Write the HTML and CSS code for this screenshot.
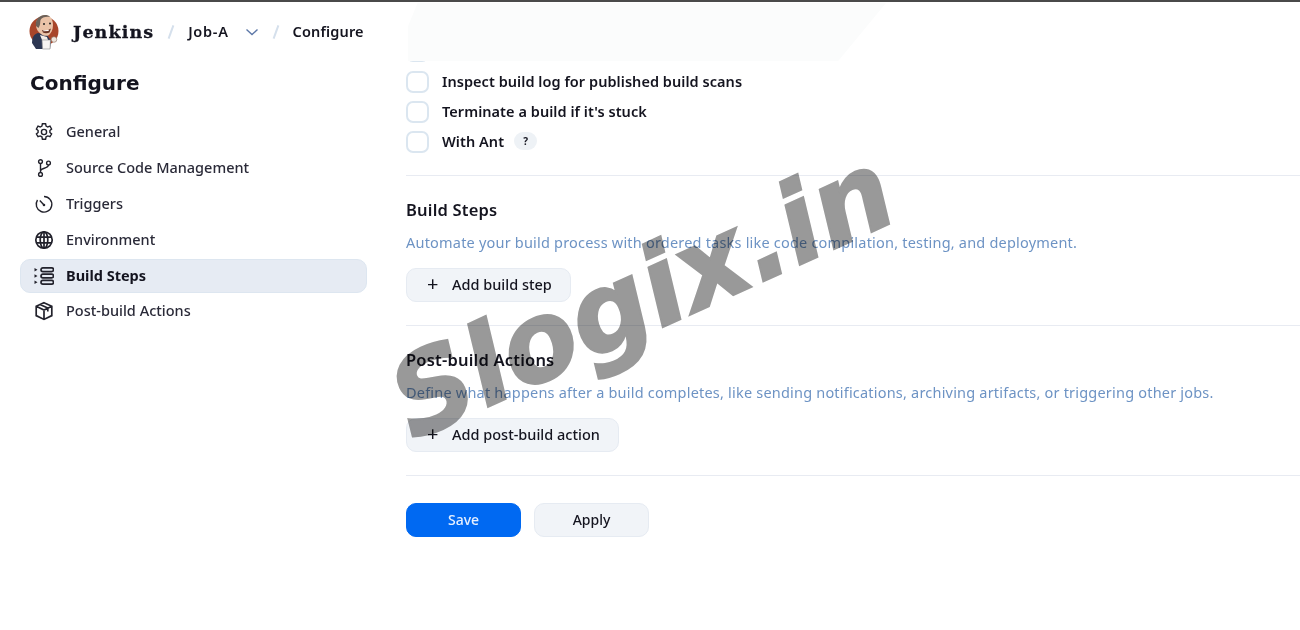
FILE: index.html
```html
<!DOCTYPE html>
<html lang="en">
<head>
  <meta charset="UTF-8" />
  <title>Job-A Config - Jenkins</title>
  <meta name="viewport" content="width=device-width, initial-scale=1.0" />
  <link rel="stylesheet" href="styles.css">
</head>
<body>

  <div class="top-line"></div>

  <div class="page">
    <div class="sidebar">
      <div class="breadcrumbs">
        <svg class="logo" viewBox="0 0 32 36" width="32" height="36">
          <circle cx="16" cy="17" r="14.500" fill="#a8452a"/>
          <path d="M4 29c0-6 2-9 6-10l9 2 4 6-1 8H8z" fill="#2c3652"/>
          <path d="M8 11C8 5 12 1 17 1s8 4 8 10c0 5-2 8-4 10-2 1.500-6 1-8-1-3-2-5-5-5-9z" fill="#eac3a8"/>
          <path d="M8 12C7 6 11 1 17 1c2 0 4 .5 5 2-4-.5-8 0-9.500 3-.5 2 0 4-1 6l-1 2z" fill="#6b6058"/>
          <path d="M14 16c3 1 6 .5 9-1.500l-1.500 4c-2 1-5 1-6.500 0z" fill="#6a3526"/>
          <path d="M15 16.500l6-.8-.5 1.300-5 .3z" fill="#fff"/>
          <circle cx="16" cy="10" r="1" fill="#222"/>
          <circle cx="22" cy="9.500" r="1" fill="#222"/>
          <path d="M12 21l7 2 1 3-6 0z" fill="#f3ede8"/>
          <path d="M14 26h8.500l-.5 9h-7.500z" fill="#f7f4f1" stroke="#8a8a8a" stroke-width=".6"/>
          <circle cx="26" cy="25.500" r="2.800" fill="#eee4dc" stroke="#8a6d5c" stroke-width=".6"/>
        </svg>
        <span class="brand">Jenkins</span>
        <span class="slash"></span>
        <span class="crumb job">Job-A</span>
        <svg class="chev" viewBox="0 0 14 8" width="14" height="8"><path d="M1.500 1.500L7 6.500l5.500-5" fill="none" stroke="#5d78a8" stroke-width="1.400"/></svg>
        <span class="slash"></span>
        <span class="crumb">Configure</span>
      </div>

      <h1 class="side-title">Configure</h1>

      <div class="nav">
        <div class="nav-item">
          <svg viewBox="0 0 20 20" width="20" height="20"><circle cx="10" cy="10" r="2.600"/><path d="M8.400 1.800h3.200l.5 2.300 1.700.9 2.200-.8 1.600 2.800-1.700 1.500v1.900l1.700 1.500-1.600 2.800-2.200-.8-1.700.9-.5 2.400H8.400l-.5-2.400-1.700-.9-2.200.8-1.600-2.800 1.700-1.500V8.500L2.400 7l1.600-2.800 2.200.8 1.700-.9z"/></svg>
          General
        </div>
        <div class="nav-item">
          <svg viewBox="0 0 20 20" width="20" height="20"><circle cx="6.500" cy="3.600" r="1.900"/><circle cx="6.500" cy="16.400" r="1.900"/><circle cx="14.500" cy="5" r="1.900"/><path d="M6.500 5.500v9M14.500 7c0 3.500-8 3-8 6"/></svg>
          Source Code Management
        </div>
        <div class="nav-item">
          <svg viewBox="0 0 20 20" width="20" height="20"><path d="M10 2.500a7.800 7.800 0 1 1-6.500 3.500M10 11L5.800 6.500"/><circle cx="10" cy="11" r=".6"/></svg>
          Triggers
        </div>
        <div class="nav-item heavy">
          <svg viewBox="0 0 20 20" width="20" height="20"><circle cx="10" cy="10" r="8.200"/><ellipse cx="10" cy="10" rx="3.800" ry="8.200"/><path d="M2 7.200h16M2 12.800h16M10 2v16"/></svg>
          Environment
        </div>
        <div class="nav-item active heavy">
          <svg viewBox="0 0 20 20" width="20" height="20"><rect x="7" y="1.800" width="12.500" height="3.800" rx="1.900"/><rect x="7" y="8.100" width="12.500" height="3.800" rx="1.900"/><rect x="7" y="14.400" width="12.500" height="3.800" rx="1.900"/><path class="dot" d="M.5 2l3 1.700-3 1.700zM.5 8.300l3 1.700-3 1.700zM.5 14.600l3 1.700-3 1.700z"/></svg>
          Build Steps
        </div>
        <div class="nav-item heavy">
          <svg viewBox="0 0 20 20" width="20" height="20"><path d="M10 1.800l7.800 3.400v9.400L10 18.400l-7.800-3.800V5.200zM2.200 5.200l7.800 3.800 7.800-3.800M10 9v9.400M6 3.500l7.800 3.600v3.500"/></svg>
          Post-build Actions
        </div>
      </div>
    </div>

    <div class="main">
      <div class="fade-area">
        <div class="cut-check"></div>
      </div>

      <div class="options">
        <label class="option"><span class="check"></span>Inspect build log for published build scans</label>
        <label class="option"><span class="check"></span>Terminate a build if it's stuck</label>
        <label class="option"><span class="check"></span>With Ant <span class="help">?</span></label>
      </div>

      <div class="section">
        <h2>Build Steps</h2>
        <p>Automate your build process with ordered tasks like code compilation, testing, and deployment.</p>
        <button class="add-btn"><span class="plus">+</span>Add build step</button>
      </div>

      <div class="section">
        <h2>Post-build Actions</h2>
        <p>Define what happens after a build completes, like sending notifications, archiving artifacts, or triggering other jobs.</p>
        <button class="add-btn"><span class="plus">+</span>Add post-build action</button>
      </div>

      <div class="actions">
        <button class="save">Save</button>
        <button class="apply">Apply</button>
      </div>
    </div>
  </div>

  <div class="blob"></div>
  <div class="watermark">Slogix.in</div>

</body>
</html>
```

FILE: styles.css
```css
* {
  box-sizing: border-box;
}

html, body {
  height: 100%;
}

body {
  font-family: "Noto Sans", sans-serif;
  font-size: 14.5px;
  background: #ffffff;
  margin: 0;
  color: #14141f;
  overflow: hidden;
  position: relative;
}

.top-line {
  height: 2px;
  background: #4a4a4a;
}

.page {
  display: flex;
}

.sidebar {
  width: 406px;
  flex-shrink: 0;
  padding: 0 39px 0 20px;
}

.breadcrumbs {
  display: flex;
  align-items: center;
  height: 60px;
  padding-left: 8px;
}

.logo {
  margin-right: 13px;
}

.brand {
  font-family: "DejaVu Serif", serif;
  font-weight: 700;
  font-size: 17.500px;
  letter-spacing: 1.100px;
  -webkit-text-stroke: .3px #14141f;
  color: #14141f;
}

.slash {
  width: 2px;
  height: 14px;
  margin: 0 16px;
  background: #d5e0ec;
  transform: rotate(20deg);
}

.crumb {
  font-weight: 600;
  font-size: 14.5px;
  letter-spacing: .15px;
  padding-bottom: 2px;
}

.crumb.job {
  letter-spacing: .7px;
}

.chev {
  margin-left: 16px;
}

.side-title {
  font-family: "DejaVu Sans", sans-serif;
  font-size: 20px;
  font-weight: 700;
  margin: 8px 0 19px 10px;
  line-height: 26px;
}

.nav {
  display: flex;
  flex-direction: column;
  gap: 2px;
}

.nav-item {
  display: flex;
  align-items: center;
  gap: 12px;
  height: 34px;
  padding: 0 0 2px 13px;
  border-radius: 10px;
  border: 1px solid transparent;
  font-weight: 500;
  color: #2a2a38;
}

.nav-item svg {
  margin-top: 2px;
  fill: none;
  stroke: #22222c;
  stroke-width: 1.400;
}

.nav-item.heavy svg {
  stroke-width: 1.700;
}

.nav-item:last-child {
  margin-top: -1px;
}

.nav-item.active {
  background: #e6ebf3;
  border-color: #dde6f0;
  font-weight: 700;
  color: #14141f;
}

.nav-item .dot {
  fill: #22222c;
  stroke: none;
}

.main {
  flex: 1;
  min-width: 0;
}

.fade-area {
  height: 60px;
  overflow: hidden;
  position: relative;
}

.cut-check {
  position: absolute;
  left: 0;
  bottom: 0;
  width: 23px;
  height: 22px;
  clip-path: inset(20px 0 0 0);
  border: 2px solid #dbe6f0;
  border-radius: 7px;
}

.options {
  display: flex;
  flex-direction: column;
  gap: 8px;
  padding: 9px 0 22px;
  border-bottom: 1px solid #e8ebf2;
}

.option {
  display: flex;
  align-items: center;
  gap: 13px;
  height: 22px;
  padding-bottom: 2px;
  font-weight: 600;
  letter-spacing: .05px;
  line-height: 20px;
}

.check {
  width: 23px;
  height: 22px;
  margin-bottom: -2px;
  border: 2px solid #dbe6f0;
  border-radius: 7px;
}

.help {
  width: 23px;
  height: 18px;
  margin-left: -3px;
  border-radius: 9px;
  background: #eef2f6;
  font-size: 10px;
  font-weight: 700;
  display: flex;
  align-items: center;
  justify-content: center;
}

.section {
  height: 150px;
  padding-top: 23px;
  border-bottom: 1px solid #e8ebf2;
}

.section h2 {
  margin: 0;
  font-size: 16.500px;
  font-weight: 600;
  letter-spacing: .2px;
  line-height: 22px;
}

.section p {
  margin: 11px 0 16px;
  line-height: 20px;
  letter-spacing: .2px;
  color: #6d93c4;
}

.add-btn {
  display: flex;
  align-items: center;
  height: 34px;
  padding: 0 18px 2px 20px;
  font-family: inherit;
  font-size: 14.5px;
  font-weight: 500;
  color: #14141f;
  background: #f1f4f8;
  border: 1px solid #e6ebf2;
  border-radius: 10px;
}

.plus {
  font-size: 20px;
  font-weight: 400;
  width: 25px;
  line-height: 20px;
  text-align: left;
}

.actions {
  display: flex;
  gap: 13px;
  padding-top: 27px;
}

.actions button {
  width: 115px;
  height: 34px;
  padding-bottom: 3px;
  border-radius: 10px;
  font-family: inherit;
  font-size: 14px;
  font-weight: 500;
}

.save {
  background: #0069f2;
  border: 1px solid #0069f2;
  color: #e6f0ff;
}

.apply {
  background: #f1f4f8;
  border: 1px solid #e6ebf2;
  color: #14141f;
}

.blob {
  position: absolute;
  left: 408px;
  top: 3px;
  width: 478px;
  height: 58px;
  background: #fbfcfc;
  clip-path: polygon(2% 0, 100% 0, 96% 40%, 90% 100%, 0 100%, 0 40%);
}

.watermark {
  position: absolute;
  left: 373px;
  top: 235px;
  font-family: "DejaVu Sans", sans-serif;
  font-size: 110px;
  font-weight: 700;
  font-style: italic;
  line-height: 120px;
  color: #999999;
  -webkit-text-stroke: 2px #999999;
  mix-blend-mode: multiply;
  transform: rotate(-24.5deg);
  pointer-events: none;
}
```
